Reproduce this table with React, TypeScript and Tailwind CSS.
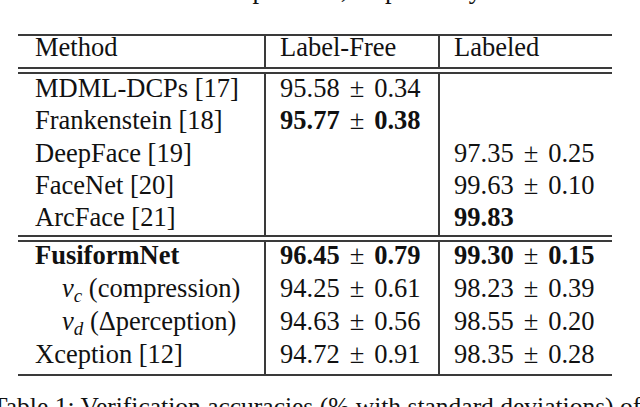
const rows1 = [
  { name: "MDML-DCPs [17]", free: ["95.58", "0.34"], labeled: null, freeBold: false, labeledBold: false },
  { name: "Frankenstein [18]", free: ["95.77", "0.38"], labeled: null, freeBold: true, labeledBold: false },
  { name: "DeepFace [19]", free: null, labeled: ["97.35", "0.25"], freeBold: false, labeledBold: false },
  { name: "FaceNet [20]", free: null, labeled: ["99.63", "0.10"], freeBold: false, labeledBold: false },
  { name: "ArcFace [21]", free: null, labeled: ["99.83"], freeBold: false, labeledBold: true },
];

const Value = ({ v, bold }: { v: string[] | null; bold: boolean }) => {
  if (!v) return null;
  return (
    <span className="whitespace-nowrap">
      <span className={bold ? "font-bold" : ""}>{v[0]}</span>
      {v.length > 1 && (
        <>
          <span className="mx-[10px]">±</span>
          <span className={bold ? "font-bold" : ""}>{v[1]}</span>
        </>
      )}
    </span>
  );
};

const Rule = () => <div className="h-[2px] bg-[#3a3a3a]" />;

export default function App() {
  return (
    <div className="w-[640px] h-[407px] overflow-hidden bg-white text-[#111] text-[26.5px] font-['Liberation_Serif']">
      {/* tail of the line above the table */}
      <div className="h-[12px] overflow-hidden">
        <div className="-mt-[24px] pl-[162px] leading-[26px] whitespace-nowrap">and compression, respectively.</div>
      </div>

      <div className="mt-[22px] ml-[18px] w-[594px]">
        <Rule />
        <div className="grid grid-cols-[246px_174px_174px] h-[31px] leading-[23px]">
          <div className="pl-[17px]">Method</div>
          <div className="border-l-2 border-[#3a3a3a] pl-[14px]">Label-Free</div>
          <div className="border-l-2 border-[#3a3a3a] pl-[14px]">Labeled</div>
        </div>
        <Rule />
        <div className="h-[3px]" />
        <Rule />

        <div className="grid grid-cols-[246px_174px_174px] leading-[28px]">
          <div className="flex flex-col">
            {rows1.map((r) => (
              <div key={r.name} className="h-[32.3px] pl-[17px] whitespace-nowrap">{r.name}</div>
            ))}
          </div>
          <div className="flex flex-col border-l-2 border-[#3a3a3a] pl-[14px]">
            {rows1.map((r) => (
              <div key={r.name} className="h-[32.3px]"><Value v={r.free} bold={r.freeBold} /></div>
            ))}
          </div>
          <div className="flex flex-col border-l-2 border-[#3a3a3a] pl-[14px]">
            {rows1.map((r) => (
              <div key={r.name} className="h-[32.3px]"><Value v={r.labeled} bold={r.labeledBold} /></div>
            ))}
          </div>
        </div>

        <Rule />
        <div className="h-[3px]" />
        <Rule />

        <div className="grid grid-cols-[246px_174px_174px] leading-[26px]">
          <div className="flex flex-col whitespace-nowrap">
            <div className="h-[32.8px] pl-[17px] font-bold">FusiformNet</div>
            <div className="h-[32.8px] pl-[44px]">
              <i>v</i><sub className="italic text-[19px]">c</sub> (compression)
            </div>
            <div className="h-[32.8px] pl-[44px]">
              <i>v</i><sub className="italic text-[19px]">d</sub> (Δperception)
            </div>
            <div className="h-[32.8px] pl-[17px]">Xception [12]</div>
          </div>
          <div className="flex flex-col border-l-2 border-[#3a3a3a] pl-[14px]">
            <div className="h-[32.8px]"><Value v={["96.45", "0.79"]} bold /></div>
            <div className="h-[32.8px]"><Value v={["94.25", "0.61"]} bold={false} /></div>
            <div className="h-[32.8px]"><Value v={["94.63", "0.56"]} bold={false} /></div>
            <div className="h-[32.8px]"><Value v={["94.72", "0.91"]} bold={false} /></div>
          </div>
          <div className="flex flex-col border-l-2 border-[#3a3a3a] pl-[14px]">
            <div className="h-[32.8px]"><Value v={["99.30", "0.15"]} bold /></div>
            <div className="h-[32.8px]"><Value v={["98.23", "0.39"]} bold={false} /></div>
            <div className="h-[32.8px]"><Value v={["98.55", "0.20"]} bold={false} /></div>
            <div className="h-[32.8px]"><Value v={["98.35", "0.28"]} bold={false} /></div>
          </div>
        </div>
        <Rule />
      </div>

      <div className="mt-[18px] -ml-[8px] text-[25.5px] leading-[26px] whitespace-nowrap">
        Table 1: Verification accuracies (% with standard deviations) of
      </div>
    </div>
  );
}
